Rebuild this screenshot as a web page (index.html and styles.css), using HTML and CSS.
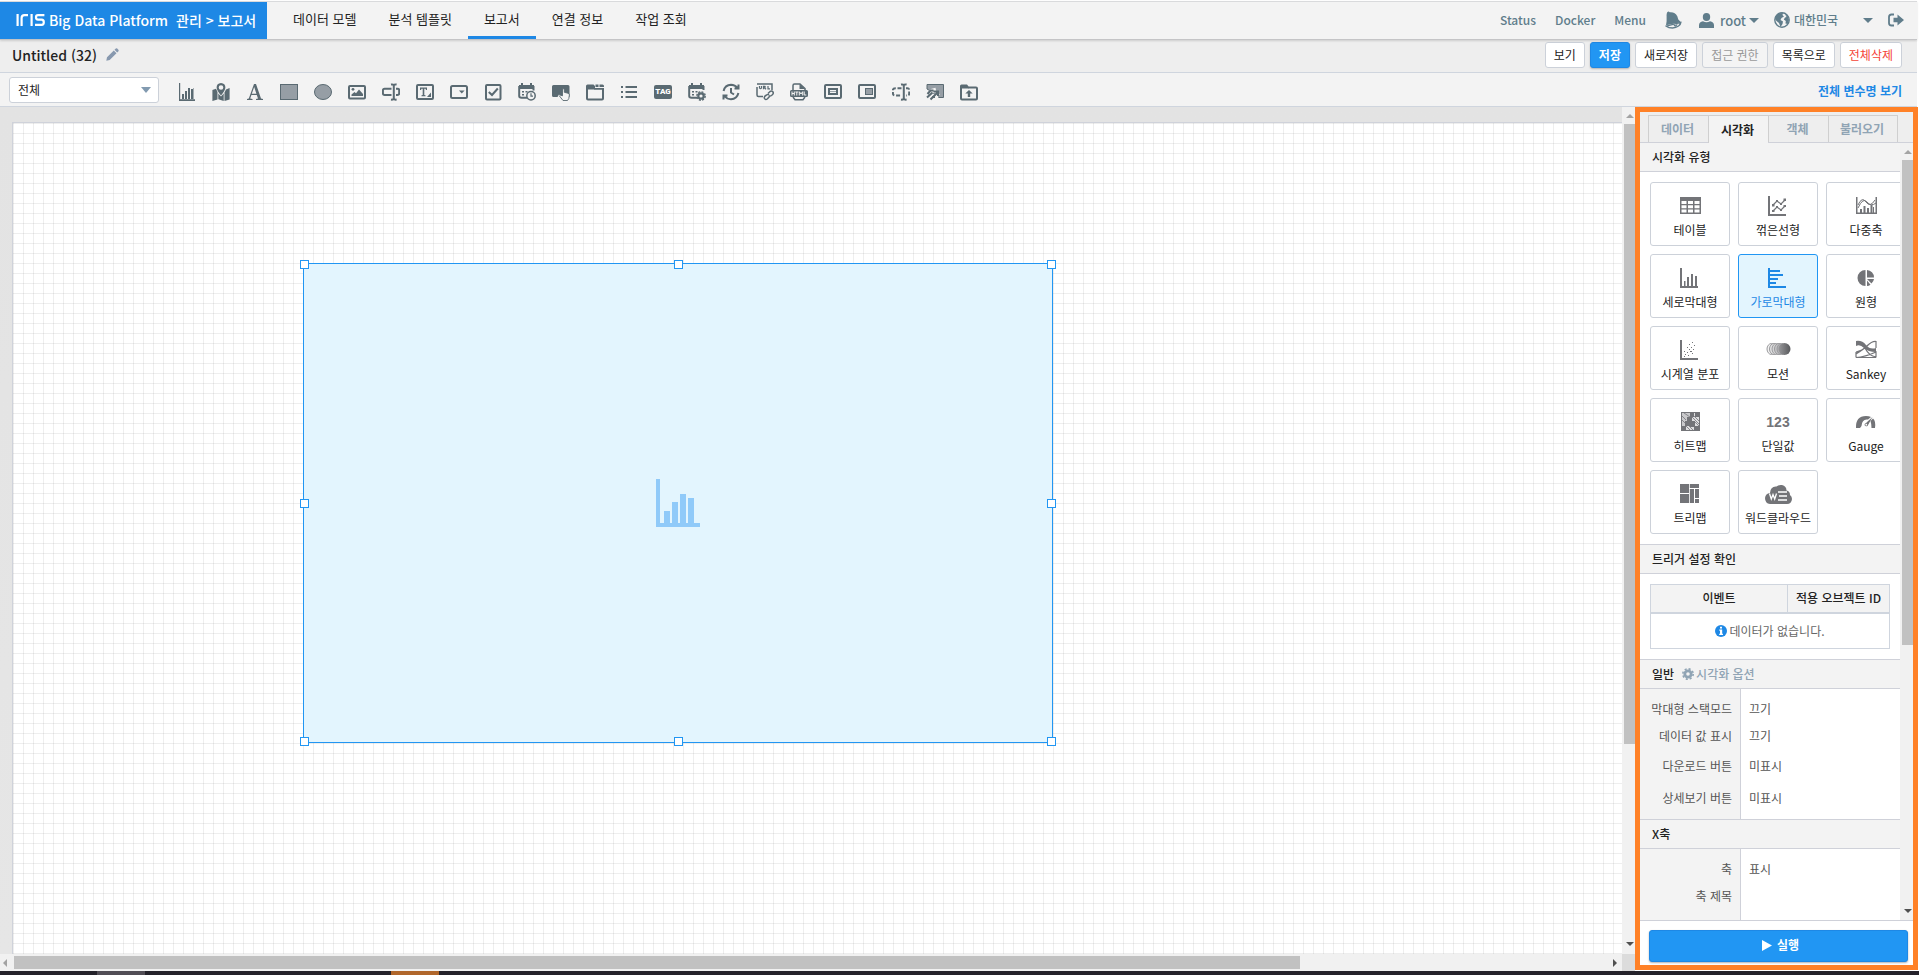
FILE: index.html
```html
<!DOCTYPE html>
<html lang="ko">
<head>
<meta charset="utf-8">
<title>IRIS Big Data Platform</title>
<meta name="viewport" content="width=device-width, initial-scale=1">
<link rel="stylesheet" href="styles.css">
</head>
<body>
<header class="top">
  <a class="brand" href="#">
    <svg class="logo" width="29" height="12" viewBox="0 0 29 12" fill="none" stroke="#fff" stroke-width="2.2"><path d="M1.6 0V12M5.6 12V4Q5.6 1.1 8.5 1.1H12M15.6 0V12M28.4 1.1H22Q20 1.1 20 3.3T22 5.6H25.6Q27.8 5.6 27.8 8.2T25.6 10.9H19"/></svg>
    <span class="brand-name">Big Data Platform</span>
    <span class="brand-path">관리 &gt; 보고서</span>
  </a>
  <nav class="nav">
    <a href="#">데이터 모델</a>
    <a href="#">분석 템플릿</a>
    <a href="#" class="on">보고서</a>
    <a href="#">연결 정보</a>
    <a href="#">작업 조회</a>
  </nav>
  <div class="tools">
    <a href="#">Status</a>
    <a href="#">Docker</a>
    <a href="#">Menu</a>
    <button class="plain" aria-label="Alerts"><svg width="17" height="18" viewBox="0 0 17 18"><path fill="#607d8b" d="M2.2 1.3Q3.6-.4 4.7 1.2Q10 .6 12.300 5.300L13.300 8.600L16 11.300L1 14.200L1.600 10.200V5.200Q1.400 3 2.200 1.300Z"/><path fill="none" stroke="#607d8b" stroke-width="1.300" d="M1.300 15.200L15.900 11.400Q15.800 13.200 13.500 15Q11 16.800 7.500 17Q3.500 17 1.300 15.200ZM9 14.200Q10.500 16 12.300 13.200"/></svg></button>
    <button class="plain user"><svg width="15" height="15" viewBox="0 0 15 15" fill="#607d8b"><ellipse cx="7.500" cy="4" rx="3.700" ry="4"/><path d="M0 15V12Q.3 8.700 4 8.200Q7.500 10.500 11 8.200Q14.700 8.700 15 12V15Z"/></svg><span>root</span><i class="caret"></i></button>
    <div class="lang">
      <svg width="16" height="16" viewBox="0 0 16 16"><circle cx="8" cy="8" r="7.200" fill="#f3f3f3" stroke="#607d8b" stroke-width="1.400"/><path fill="#607d8b" d="M1.500 4L5 1.300L9 1L8.500 3L10 4.500L7.500 6L6.500 8L9 9.500L8.500 12L6.500 15L5 11L2.500 9L1 7ZM11 2L14 4.500L15 8L13.500 12L11.500 11.500L11.800 9L9.800 7.500L11 5.500L12.500 5Z"/></svg>
      <select aria-label="국가"><option>대한민국</option></select>
    </div>
    <button class="plain exit" aria-label="로그아웃"><svg width="16" height="14" viewBox="0 0 16 14"><path fill="none" stroke="#607d8b" stroke-width="1.800" d="M6 1.500H3.500Q1 1.500 1 4V10Q1 12.500 3.500 12.500H6"/><path fill="#607d8b" d="M5.500 4.800H9.500V1.500L16 7L9.500 12.500V9.200H5.500Z"/></svg></button>
  </div>
</header>

<div class="titlebar">
  <h1>Untitled (32)</h1>
  <button class="plain" aria-label="이름 변경"><svg width="13" height="13" viewBox="0 0 13 13" fill="#8798ae"><path d="M.3 12.700L1 9.300L7.800 2.500L10.500 5.200L3.700 12ZM8.500 1.800L9.800.5Q10.500 0 11.200.6L12.400 1.800Q13 2.500 12.500 3.200L11.200 4.500Z"/></svg></button>
  <div class="actions">
    <button class="btn">보기</button>
    <button class="btn primary">저장</button>
    <button class="btn">새로저장</button>
    <button class="btn" disabled>접근 권한</button>
    <button class="btn">목록으로</button>
    <button class="btn danger">전체삭제</button>
  </div>
</div>

<div class="toolbar">
  <div class="pick"><select aria-label="대상"><option>전체</option></select></div>
  <div class="icons">
    <button aria-label="차트"><svg viewBox="0 0 18 18"><path class="f" d="M1 0H2.200V16.300H17V18H1ZM4 11H6V16H4ZM7 8H9V16H7ZM10 5H12V16H10ZM13 6H15V16H13ZM15.500 5H16V16H15.500Z"/></svg></button>
    <button aria-label="지도"><svg viewBox="0 0 18 18"><path class="f" fill-rule="evenodd" d="M9 0Q13.400.3 13.400 4.500Q13.200 7.500 9 12.500Q4.800 7.500 4.600 4.500Q4.600.3 9 0ZM9 2.200A2.300 2.300 0 1 0 9 6.800A2.300 2.300 0 1 0 9 2.200Z"/><path class="f" d="M.4 7L4 5.800L5.500 9V16.500L.4 18ZM6.300 10.500L9 13.500L11.700 10.500V18L6.300 16.300ZM12.500 9.500L14 6.500L17.600 5V16.500L12.500 18Z"/></svg></button>
    <button aria-label="텍스트"><svg viewBox="0 0 18 18"><path class="f" fill-rule="evenodd" d="M8 1H10L15 15.600L17 16V17H10V16L12 15.600L10.800 12H5.400L4.200 15.600L6.500 16V17H1V16L2.800 15.600ZM8.200 4L5.800 10.800H10.400Z"/></svg></button>
    <button aria-label="사각형"><svg viewBox="0 0 18 18"><rect class="g" x=".5" y="1.500" width="17" height="15"/></svg></button>
    <button aria-label="원"><svg viewBox="0 0 18 18"><ellipse class="g" cx="9" cy="9" rx="8.500" ry="7.500"/></svg></button>
    <button aria-label="이미지"><svg viewBox="0 0 18 18"><rect class="s" x="1" y="3" width="16" height="12.500" rx="1"/><path class="f" d="M3.500 13V11.500L6.500 9L8 10.200L11 6.500L15 11V13Z"/><circle class="f" cx="5" cy="6.300" r="1.400"/></svg></button>
    <button aria-label="입력"><svg viewBox="0 0 18 18"><path class="s" d="M9.500 5.700H2.500Q.9 5.700.9 7.300V10.300Q.9 11.900 2.500 11.900H9.500M14 5.700H15.500Q17.200 5.700 17.200 7.300V10.300Q17.200 11.900 15.500 11.900H14M9 1.500Q11.800 1 11.800 3V15Q11.800 17 9 16.600M14.600 1.500Q11.800 1 11.800 3M14.600 16.600Q11.800 17 11.800 15"/></svg></button>
    <button aria-label="텍스트 영역"><svg viewBox="0 0 18 18"><rect class="s" x="1" y="2" width="16" height="14" rx="1"/><path class="f" d="M4 4.500H11V7H10L9.500 5.800H8.300V12L9.500 12.300V13.200H5.500V12.300L6.700 12V5.800H5.500L5 7H4ZM15 9.500V14H11Z"/></svg></button>
    <button aria-label="콤보박스"><svg viewBox="0 0 18 18"><rect class="s" x="1" y="3" width="16" height="12" rx="1.500"/><path class="f" d="M9 7.500H14.600L11.800 10.600Z"/></svg></button>
    <button aria-label="체크박스"><svg viewBox="0 0 18 18"><rect class="s" x="2" y="2" width="14.500" height="14.500" rx="1"/><path class="s" d="M4.800 9L8 12L13.800 5.500"/></svg></button>
    <button aria-label="날짜"><svg viewBox="0 0 18 18"><path class="s" d="M9 14.800H3.500Q1.200 14.800 1.200 13V4H15.500V7.500"/><path class="f" d="M1 2H16V6H1ZM3 0H5V3H3ZM12 0H14V3H12ZM4 8H6V9.500H4ZM7.500 8H9.500V9.500H7.500ZM4 11H6V12.500H4Z"/><circle class="s w" cx="13" cy="12.800" r="4.200"/><path class="s thin" d="M13 10.300V13.200H15"/></svg></button>
    <button aria-label="버튼"><svg viewBox="0 0 18 18"><path class="f" d="M1.500 2H16Q17.500 2 17.500 3.500V14H9L7 11.500L5.500 14H1.500Q0 14 0 12.500V3.500Q0 2 1.500 2Z"/><path fill="#f4f4f4" stroke="#5a6a72" stroke-width=".9" d="M10.500 6Q12 5.200 12.300 6.700V9.300L16 10.200Q17.500 10.500 17.400 12L16.800 15.500L15.500 17.500H11L7.500 13Q8 11.500 10.500 12.800Z"/></svg></button>
    <button aria-label="탭"><svg viewBox="0 0 18 18"><path class="s" d="M1 5V15.500Q1 16.500 2 16.500H16Q17 16.500 17 15.500V5"/><path class="f" d="M0 6.500V3Q0 1.500 1.500 1.500H7.500L9 3V6.500ZM9.500 1.500H12.500V4H9.500ZM13.500 1.500H16.500Q18 1.500 18 3V4H13.500ZM8 5H18V6.800H8Z"/></svg></button>
    <button aria-label="목록"><svg viewBox="0 0 18 18"><path class="f" d="M1 3H3V5H1ZM5.500 3H17V5H5.500ZM1 8H3V10H1ZM5.500 8H17V10H5.500ZM1 13H3V15H1ZM5.500 13H17V15H5.500Z"/></svg></button>
    <button class="tag"><span>TAG</span></button>
    <button aria-label="일정 설정"><svg viewBox="0 0 18 18"><path class="s" d="M9 14.800H3.500Q1.200 14.800 1.200 13V4H15.500V7"/><path class="f" d="M1 2H16V6H1ZM3 0H5V3H3ZM12 0H14V3H12ZM4 8H6V9.500H4ZM7.500 8H9.500V9.500H7.500ZM4 11H6V12.500H4Z"/><circle cx="13" cy="13" r="2.700" fill="#f3f3f3" stroke="#5a6a72" stroke-width="2.200"/><circle cx="13" cy="13" r="4.200" fill="none" stroke="#5a6a72" stroke-width="1.400" stroke-dasharray="2 1.300"/></svg></button>
    <button aria-label="주기"><svg viewBox="0 0 18 18"><path class="s" d="M1.600 8Q3 2 9 1.800Q13 1.800 15.500 5M16.400 10Q15 16 9 16.200Q5 16.200 2.500 13M16.500 1.500V5.600H12.500M1.500 16.500V12.400H5.500M9 5V9.500L12 11.500"/></svg></button>
    <button aria-label="URL"><svg viewBox="0 0 18 18"><path class="s mid" d="M1 4V12Q1 13.500 2.500 13.500H7M1 1H16V7"/><path class="s thin" d="M3.500 3V5Q4.500 6.500 5.500 5V3M7.500 6.200V3.300H8.800Q9.800 4 8.500 4.800L10 6.200M12 3V5.800H14"/><path class="s mid" d="M12 10.500L14 8.500Q16 7.500 17 9T15.500 12.500Q14 13.500 13 12.500M13.500 13.500L11.500 15.800Q9.500 17.500 8.500 15.500T10.500 12Q12 11 13 12"/></svg></button>
    <button aria-label="HTML"><svg viewBox="0 0 18 18"><path class="s mid" d="M3 7V2.500Q3 1 4.500 1H10L15 5.500V8M3 14L5 16.800H13L15 14"/><path class="f" d="M9.500 1V6H15ZM1.500 7H16.500Q18 7 18 8.500V12.500Q18 14 16.500 14H1.500Q0 14 0 12.500V8.500Q0 7 1.500 7Z"/><path stroke="#f3f3f3" stroke-width="1" fill="none" d="M2 8.500V12.500M4.300 8.500V12.500M2 10.500H4.300M5.300 9H8.300M6.800 9V12.500M9.300 12.500V8.700L11 11L12.700 8.700V12.500M14.200 8.500V12H16.300"/></svg></button>
    <button aria-label="프레임"><svg viewBox="0 0 18 18"><rect class="s" x="1" y="2" width="16" height="13" rx="1"/><rect class="s" x="5" y="6" width="8" height="5"/><path stroke="#9ba3a9" d="M6 8.500H12"/></svg></button>
    <button aria-label="팝업"><svg viewBox="0 0 18 18"><rect class="s" x="1" y="2" width="16" height="13" rx="1"/><rect class="g" x="7.500" y="5.500" width="7" height="6"/></svg></button>
    <button aria-label="동적 입력"><svg viewBox="0 0 18 18"><path class="s" stroke-dasharray="4 1.700" d="M9.500 5.200H3.500Q.9 5.200.9 7.300V10.300Q.9 12.500 3.500 12.500H9.500M14 5.200H15.500Q17.200 5.200 17.200 7.300V10.300Q17.200 12.500 15.500 12.500H14"/><path class="s" d="M9 1.500Q11.800 1 11.800 3V15Q11.800 17 9 16.600M14.600 1.500Q11.800 1 11.800 3M14.600 16.600Q11.800 17 11.800 15"/></svg></button>
    <button aria-label="링크 연결"><svg viewBox="0 0 18 18"><path class="g" d="M1 1.500H17.500V14.500H13L6 9L1 6Z"/><path fill="none" stroke="#f3f3f3" stroke-width="4.500" d="M1 13L6 8L10 7M4 17L9 14L12 10"/><path class="s" d="M1.500 11L4.500 7.500H7.500M1 14.500L6.500 9.500M4.500 16.500L11.500 9.500M7.500 8.500H12V13M6 14H9"/></svg></button>
    <button aria-label="업로드"><svg viewBox="0 0 18 18"><path class="s" d="M1 4V15.500Q1 16.500 2 16.500H16Q17 16.500 17 15.500V5.500Q17 4.500 16 4.500H8.500"/><path class="f" d="M0 5.500V3Q0 1.500 1.500 1.500H7L9 4V5.500ZM9 7L12.700 10.500H10.200V14H7.800V10.500H5.300Z"/></svg></button>
  </div>
  <a class="vars" href="#">전체 변수명 보기</a>
</div>

<main class="work">
  <section class="stage">
    <div class="view">
      <div class="paper">
        <div class="object">
          <svg width="44" height="48" viewBox="0 0 44 48" fill="#90caf9"><path d="M0 0H4V44H44V48H0ZM8 32H14V45H8ZM16 23H22V45H16ZM24 15H30V45H24ZM32 19H38V45H32Z"/></svg>
          <i class="h nw"></i><i class="h n"></i><i class="h ne"></i><i class="h w"></i><i class="h e"></i><i class="h sw"></i><i class="h s"></i><i class="h se"></i>
        </div>
      </div>
    </div>
    <div class="vbar"><i class="up"></i><div class="track"><div class="thumb" style="height:76.4%"></div></div><i class="down"></i></div>
    <div class="hbar"><i class="left"></i><div class="track"><div class="thumb" style="width:80.8%"></div></div><i class="right"></i></div>
    <div class="corner"></div>
  </section>

  <aside class="panel">
    <div class="tabs" role="tablist">
      <button role="tab">데이터</button><button role="tab" class="on" aria-selected="true">시각화</button><button role="tab">객체</button><button role="tab" class="wide">불러오기</button>
    </div>
    <div class="scroll">
      <div class="content">
        <h2>시각화 유형</h2>
        <div class="cards">
          <button class="card"><svg viewBox="0 0 20 20"><path fill-rule="evenodd" d="M0 1H21V18H0ZM1.500 5V8H6.500V5ZM8 5V8H13V5ZM14.500 5V8H19.500V5ZM1.500 9.300V12.300H6.500V9.300ZM8 9.300V12.300H13V9.300ZM14.500 9.300V12.300H19.500V9.300ZM1.500 13.600V16.600H6.500V13.600ZM8 13.600V16.600H13V13.600ZM14.500 13.600V16.600H19.500V13.600Z"/></svg><span>테이블</span></button>
          <button class="card"><svg viewBox="0 0 20 20"><path d="M0 0H2V18H18V20H0Z"/><g fill="none" stroke="#737478" stroke-width="1.200"><path d="M5 9L9 5L13 8L17 4M5 15L9 11L13 14L17 10"/></g><path d="M4 8H6.500V10.500H4ZM8 4H10V6H8ZM12 7H14V9H12ZM15.500 2.500H18V5H15.500ZM4 14H6.500V16H4ZM8 10H10V12H8ZM12 13H14V15H12ZM15.500 9H18V11H15.500Z"/></svg><span>꺾은선형</span></button>
          <button class="card"><svg viewBox="0 0 20 20"><path d="M0 1H1.500V16.500H19.500V1H21V18H0ZM4 13H6V17H4ZM7.500 10H9.500V17H7.500ZM11 12H13V17H11ZM14.500 9H16.500V17H14.500ZM17 11H18V17H17Z"/><path fill="none" stroke="#737478" d="M2 9Q6 0 10 6T19 4M2 12Q7 1 11 6T20 7"/></svg><span>다중축</span></button>
          <button class="card"><svg viewBox="0 0 20 20"><path d="M0 0H2V18H18V20H0ZM4 13H5.500V18H4ZM7 9H9V18H7ZM11 6H13V18H11ZM15 8H17V18H15Z"/></svg><span>세로막대형</span></button>
          <button class="card on"><svg viewBox="0 0 20 20"><path d="M0 0H2V18H18V20H0ZM2 2H12V4H2ZM2 6H15V8H2ZM2 10H10V12H2ZM2 14H8V16H2Z"/></svg><span>가로막대형</span></button>
          <button class="card"><svg viewBox="0 0 20 20"><path d="M9.500 2V18A8 8 0 0 1 9.500 2ZM11 2A7.500 7.500 0 0 1 18 9.500H11ZM11 11H18A7.500 7.500 0 0 1 15.500 15.500ZM11 12.500L14.500 16.700A7 7 0 0 1 11 18Z"/></svg><span>원형</span></button>
          <button class="card"><svg viewBox="0 0 20 20"><path d="M0 0H2V18H18V20H0ZM12 2H13V3H12ZM9 4H10V5H9ZM14 5H15V6H14ZM7 7H8V8H7ZM11 7H12V8H11ZM9 9H10V10H9ZM13 9H14V10H13ZM4 11H5V12H4ZM7 12H8V13H7ZM10 11H12V12H10ZM5 14H6V15H5ZM8 15H9V16H8ZM12 13H13V14H12ZM4 16H5V17H4Z"/></svg><span>시계열 분포</span></button>
          <button class="card"><svg class="big" viewBox="0 0 27 20"><defs><linearGradient id="ball"><stop stop-color="#98989b"/><stop offset="1" stop-color="#58595c"/></linearGradient></defs><g fill="#fff" stroke="#9a9a9d"><ellipse cx="6.500" cy="9" rx="4.500" ry="5.500" fill="#f1f1f1"/><ellipse cx="9" cy="9" rx="4.500" ry="5.500" fill="#e3e3e4"/><ellipse cx="11.500" cy="9" rx="4.500" ry="5.500" fill="#d4d4d5"/><ellipse cx="14" cy="9" rx="4.500" ry="5.500" fill="#c4c4c6"/><ellipse cx="16.500" cy="9" rx="4.500" ry="5.500" fill="#b0b0b3"/></g><circle cx="19.500" cy="9" r="6" fill="url(#ball)"/></svg><span>모션</span></button>
          <button class="card"><svg viewBox="0 0 20 20"><path d="M0 1Q6 0 10 5T20 8V12Q12 12 8 8T0 6Z"/><path fill="none" stroke="#737478" stroke-width="1.200" d="M0 12Q6 11 11 6T20 1.500V8M0 17.500Q9 17 20 12V17.500M0 14Q8 9 12 5M0 17.500V12M9 8Q13 16 20 17M0 17.500H20"/></svg><span>Sankey</span></button>
          <button class="card"><svg viewBox="0 0 20 20"><path d="M1 0H20V19H1Z"/><path fill="#c9c9cb" d="M2 1H10V5H7V9H5V14H2Z"/><path fill="#dededf" d="M14 1H15V5H19V14H15V9H12V5H14ZM6 14H10V15H14V18H6Z"/><path fill="none" stroke="#737478" stroke-width=".8" d="M12 5L19 12M14 4L19 9M15 10L19 14M6 14L10 18M9 14L13 18M4 1L10 5M2 4L6 8M2 8L5 11"/></svg><span>히트맵</span></button>
          <button class="card"><b class="num">123</b><span>단일값</span></button>
          <button class="card"><svg viewBox="0 0 20 20"><path fill-rule="evenodd" d="M0 16Q-.5 4 10 4Q13 4 15 5L12 7.500Q6 6.500 5.500 14L4 16ZM17 6.500Q20 9 19 16H15.500Q15.500 12 14.500 9ZM16.500 5L11.500 14Q9.500 15 8.500 13Q8.500 11.500 10 11ZM10.300 11.800A.9.900 0 1 0 10.300 13.600A.9.900 0 1 0 10.300 11.800Z"/></svg><span>Gauge</span></button>
          <button class="card"><svg viewBox="0 0 20 20"><path d="M0 0H9V9H0ZM0 10H9V19H0ZM9.800 0H19V4H9.800ZM9.800 5H14V19H9.800ZM15 5H19V14H15ZM15 15H19V19H15Z"/></svg><span>트리맵</span></button>
          <button class="card"><svg class="big" viewBox="0 0 27 20"><path d="M5 20Q0 19.500 0 14Q.5 9.500 5 9Q5.500 2 11.500 2.500Q14 .5 17 1Q21.500 2 21.500 6.500Q25 7 25 11Q27 12.500 27 15Q26.500 20 22 20Z"/><path fill="none" stroke="#fff" stroke-width="1.300" d="M4.500 9.500L6.300 15L8 10.500L9.700 15L11.500 9.500M13 8H22M14 12H22M13 16H22"/></svg><span>워드클라우드</span></button>
        </div>
        <h2 class="sec">트리거 설정 확인</h2>
        <div class="tablebox">
          <table>
            <thead><tr><th class="c1">이벤트</th><th>적용 오브젝트 ID</th></tr></thead>
            <tbody><tr><td colspan="2"><div class="none"><svg width="12" height="12" viewBox="0 0 12 12"><circle cx="6" cy="6" r="6" fill="#1e88e5"/><path fill="#fff" d="M5 1.800H7V3.500H5ZM4.300 4.600H7.200V8.700H8V10H4.200V8.700H5V5.800H4.300Z"/></svg>데이터가 없습니다.</div></td></tr></tbody>
          </table>
        </div>
        <h2 class="sec">일반 <a href="#"><svg width="12" height="12" viewBox="0 0 12 12"><circle cx="6" cy="6" r="3.200" fill="none" stroke="#90a4b4" stroke-width="2.800"/><circle cx="6" cy="6" r="5.200" fill="none" stroke="#90a4b4" stroke-width="1.600" stroke-dasharray="2.100 1.980"/></svg>시각화 옵션</a></h2>
        <dl class="props">
          <div class="r1"><dt>막대형 스택모드</dt><dd>끄기</dd></div>
          <div class="r1"><dt>데이터 값 표시</dt><dd>끄기</dd></div>
          <div><dt>다운로드 버튼</dt><dd>미표시</dd></div>
          <div><dt>상세보기 버튼</dt><dd>미표시</dd></div>
        </dl>
        <h2 class="sec">X축</h2>
        <dl class="props last">
          <div class="r1"><dt>축</dt><dd>표시</dd></div>
          <div class="r1"><dt>축 제목</dt><dd></dd></div>
        </dl>
      </div>
      <div class="vbar"><i class="up"></i><div class="track"><div class="thumb" style="height:65.3%"></div></div><i class="down"></i></div>
    </div>
    <div class="run"><button><svg width="10" height="11" viewBox="0 0 10 11"><path fill="#fff" d="M0 0L10 5.500L0 11Z"/></svg>실행</button></div>
  </aside>
</main>
<footer class="dock"><i class="app"></i><i class="app hot"></i></footer>
</body>
</html>
```
FILE: styles.css
```css
* { box-sizing: border-box; }
body {
  margin: 0;
  height: 100vh;
  display: flex;
  flex-direction: column;
  overflow: hidden;
  background: #fff;
  color: #222;
  font: 12px/20px "Noto Sans CJK KR", "Noto Sans", sans-serif;
}
button, select { font: inherit; color: inherit; margin: 0; padding: 0; }
button { cursor: pointer; }
a { color: inherit; text-decoration: none; }
h1, h2, dl, dd { margin: 0; }
svg { display: block; flex: none; }

/* header */
.top, .titlebar, .toolbar { flex: none; display: flex; align-items: center; margin-right: 2px; }
.top {
  height: 39px;
  margin-top: 1px;
  margin-bottom: -1px;
  padding-bottom: 1px;
  background: #f3f3f3;
  border-top: 1px solid #d9dadc;
  border-bottom: 1px solid #c4c4c6;
  box-shadow: 0 1px 2px rgba(0, 0, 0, .14);
  z-index: 1;
}
.brand {
  align-self: stretch;
  width: 267px;
  display: flex;
  align-items: center;
  margin-bottom: -1px;
  padding: 0 0 2px 16px;
  background: #1e88e5;
  color: #fff;
  font-size: 14px;
  font-weight: 500;
  white-space: nowrap;
}
.brand-name { margin-left: 4px; }
.brand-path { margin-left: 8px; }
.nav { align-self: stretch; display: flex; margin: 0 0 -1px 10px; font-size: 13px; }
.nav a { padding: 0 16px; line-height: 34px; }
.nav .on { border-bottom: 3px solid #1e88e5; }
.tools {
  margin-left: auto;
  padding-right: 13px;
  display: flex;
  align-items: center;
  color: #607d8b;
  font-weight: 500;
}
.tools > a { margin-right: 19px; }
.plain { border: 0; background: none; }
.user { display: flex; align-items: center; margin: 0 15px 0 17px; font-size: 13px; }
.user span { margin: 2px 3px 0 6px; }
.caret { border: 5px solid transparent; border-top-color: #607d8b; border-bottom: 0; }
.lang { position: relative; display: flex; align-items: center; }
.lang select {
  appearance: none;
  width: 86px;
  margin-left: 4px;
  border: 0;
  background: none;
}
.lang::after {
  content: "";
  position: absolute;
  right: 7px;
  border: 5px solid transparent;
  border-top-color: #607d8b;
  border-bottom: 0;
}
.exit { margin-left: 8px; }

/* title row */
.titlebar { height: 34px; padding: 0 15px 2px 12px; background: #eee; border-bottom: 1px solid #cfd5de; }
.titlebar h1 { font-size: 14px; font-weight: 500; margin-right: 9px; }
.actions { margin-left: auto; display: flex; gap: 5px; }
.btn {
  height: 26px;
  padding: 0 8px;
  border: 1px solid #ccd1d9;
  border-radius: 3px;
  background: #fff;
  line-height: 20px;
}
.btn.primary { background: #2196f3; border-color: #1e88e5; color: #fff; font-weight: 700; box-shadow: 0 1px 2px rgba(0, 0, 0, .25); }
.btn.danger { color: #f44336; }
.btn:disabled { background: #f4f4f4; color: #999; }

/* tool row */
.toolbar { height: 34px; padding: 0 15px 0 9px; background: #f3f3f3; border-bottom: 1px solid #cfd5de; }
.pick { position: relative; width: 150px; }
.pick select {
  appearance: none;
  display: block;
  width: 100%;
  height: 26px;
  padding: 0 8px;
  border: 1px solid #ccd1d9;
  border-radius: 3px;
  background: #fff;
}
.pick::after {
  content: "";
  position: absolute;
  right: 8px;
  top: 10px;
  border: 5px solid transparent;
  border-top: 6px solid #829ab0;
  border-bottom: 0;
}
.icons { display: flex; gap: 16px; margin: 5px 0 0 19px; }
.icons button { width: 18px; height: 18px; border: 0; background: none; }
.icons svg { width: 18px; height: 18px; }
.icons .f { fill: #5a6a72; }
.icons .g { fill: #969ea5; stroke: #5a6a72; }
.icons .s { fill: none; stroke: #5a6a72; stroke-width: 2; }
.icons .w { fill: #f3f3f3; }
.icons .w, .icons .mid { stroke-width: 1.5; }
.icons .thin { stroke-width: 1.2; }
.icons .tag {
  height: 14px;
  margin-top: 2px;
  border-radius: 2px;
  background: #5a6a72;
  color: #fff;
  font: 900 8px/14px Roboto, sans-serif;
}
.vars { margin: 2px 0 0 auto; color: #1e88e5; font-weight: 700; }

/* work area */
.work { flex: 1; min-height: 0; display: grid; grid-template-columns: minmax(0, 1fr) 283px; padding: 0 1px 1px 0; background: #fff; }
.stage { min-height: 0; margin-bottom: -1px; display: grid; grid-template-columns: minmax(0, 1fr) 13px; grid-template-rows: minmax(0, 1fr) 17px; }
.view { padding: 15px 0 0 12px; background: linear-gradient(#e3e3e3, #e6e6e6); overflow: hidden; }
.paper {
  position: relative;
  height: 100%;
  border: solid #cfd2da;
  border-width: 1px 0 0 1px;
  background:
    linear-gradient(rgba(0, 0, 0, .065) 1px, transparent 1px) 0 0 / 10px 10px,
    linear-gradient(90deg, rgba(0, 0, 0, .065) 1px, transparent 1px) 0 0 / 10px 10px,
    #fff;
}
.object {
  position: absolute;
  left: 290px;
  top: 140px;
  width: 750px;
  height: 480px;
  display: flex;
  align-items: center;
  justify-content: center;
  border: 1px solid #2196f3;
  background: #e3f5fe;
}
.h { position: absolute; width: 9px; height: 9px; border: 1px solid #2196f3; background: #fff; }
.nw, .w, .sw { left: -4px; }
.ne, .e, .se { right: -4px; }
.n, .s.h { left: calc(50% - 4px); }
.nw, .n, .ne { top: -4px; }
.sw, .s.h, .se { bottom: -4px; }
.w.h, .e { top: calc(50% - 4px); }

/* scroll bars */
.vbar { display: flex; flex-direction: column; align-items: center; background: #f1f1f1; padding: 7px 0 8px 2px; }
.vbar .track { flex: 1; align-self: stretch; margin: 6px 0; }
.thumb { height: 100%; background: #c1c1c1; }
.up { border: 4px solid transparent; border-bottom-color: #a3a3a3; border-top: 0; }
.down { border: 4px solid transparent; border-top-color: #505050; border-bottom: 0; }
.hbar { display: flex; align-items: center; background: #f1f1f1; padding: 0 5px 0 3px; }
.hbar .track { flex: 1; height: 13px; margin: 0 7px; }
.left { border: 4px solid transparent; border-right-color: #a3a3a3; border-left: 0; }
.right { border: 4px solid transparent; border-left-color: #505050; border-right: 0; }
.corner { background: #dcdcdc; }

/* side panel */
.panel { min-height: 0; display: flex; flex-direction: column; border: 5px solid #ff8127; background: #fff; }
.tabs { flex: none; display: flex; padding: 3px 0 0 8px; background: #eee; border-bottom: 1px solid #cfd1d9; }
.tabs button {
  width: 60px;
  height: 27px;
  padding-right: 2px;
  border: 1px solid #cfcfcf;
  border-width: 1px 0 0 1px;
  background: #eee;
  color: #90a4b4;
  font-weight: 700;
}
.tabs .wide { width: 70px; border-right-width: 1px; }
.tabs .on { height: 28px; margin-bottom: -1px; background: #f3f3f3; color: #222; }
.scroll { flex: 1; min-height: 0; display: flex; }
.content { flex: 1; min-width: 0; overflow: hidden; display: flex; flex-direction: column; }
.scroll .vbar { width: 13px; padding-top: 7px; padding-bottom: 7px; }
.content h2 {
  flex: none;
  height: 29px;
  padding: 0 12px;
  display: flex;
  align-items: center;
  background: #f3f3f3;
  border-bottom: 1px solid #cfd1d9;
  font-size: 12px;
  font-weight: 500;
}
.content .sec { height: 30px; border-top: 1px solid #cfd1d9; }
h2 a { display: flex; align-items: center; gap: 2px; margin-left: 8px; color: #90a4b4; }
.cards { flex: none; display: grid; grid-template-columns: repeat(3, 80px); gap: 8px; padding: 10px; }
.card {
  height: 64px;
  padding: 13px 0 0;
  display: flex;
  flex-direction: column;
  align-items: center;
  gap: 4px;
  border: 1px solid #ccd1d9;
  border-radius: 3px;
  background: #fff;
}
.card svg { width: 20px; height: 20px; fill: #737478; overflow: visible; }
.card .big { width: 27px; }
.card span { white-space: nowrap; }
.card.on { border-color: #2196f3; background: #e3f5fe; color: #1e88e5; }
.card.on svg { fill: #1e88e5; }
.num { height: 20px; color: #737478; font: 700 14px/20px "Liberation Sans", sans-serif; }
.tablebox { flex: none; padding: 10px; }
table { width: 100%; border-collapse: collapse; border: 1px solid #cfd5de; }
th { height: 28px; padding: 0; background: #f3f3f3; border: 1px solid #cfd5de; border-bottom-width: 2px; font-weight: 500; }
.c1 { width: 137px; }
td { height: 36px; padding: 0; color: #666; }
.none { display: flex; align-items: center; justify-content: center; gap: 2px; }
.props {
  flex: none;
  padding: 7px 0 5px;
  color: #555;
  background: linear-gradient(90deg, #f3f3f3 100px, #cfd1d9 100px, #cfd1d9 101px, #fff 101px);
}
.props div { display: grid; grid-template-columns: 100px 1fr; height: 32px; line-height: 32px; }
.props .r1 { height: 27px; line-height: 26px; }
dt { padding-right: 8px; text-align: right; }
dd { padding-left: 9px; }
.props.last { flex: 1 0 auto; }
.run { flex: none; padding: 9px 5px 3px 9px; border-top: 1px solid #cfd1d9; }
.run button {
  width: 100%;
  height: 32px;
  display: flex;
  align-items: center;
  justify-content: center;
  gap: 5px;
  padding: 0 0 2px 4px;
  border: 1px solid #1e88e5;
  border-radius: 3px;
  background: #2196f3;
  color: #fff;
  font-weight: 700;
  box-shadow: 0 1px 2px rgba(0, 0, 0, .3);
}

/* desktop strip */
.dock { flex: none; height: 4px; display: flex; gap: 246px; padding-left: 97px; background: #24222a; }
.app { width: 48px; background: #514d55; }
.hot { background: #b0662b; }
```
